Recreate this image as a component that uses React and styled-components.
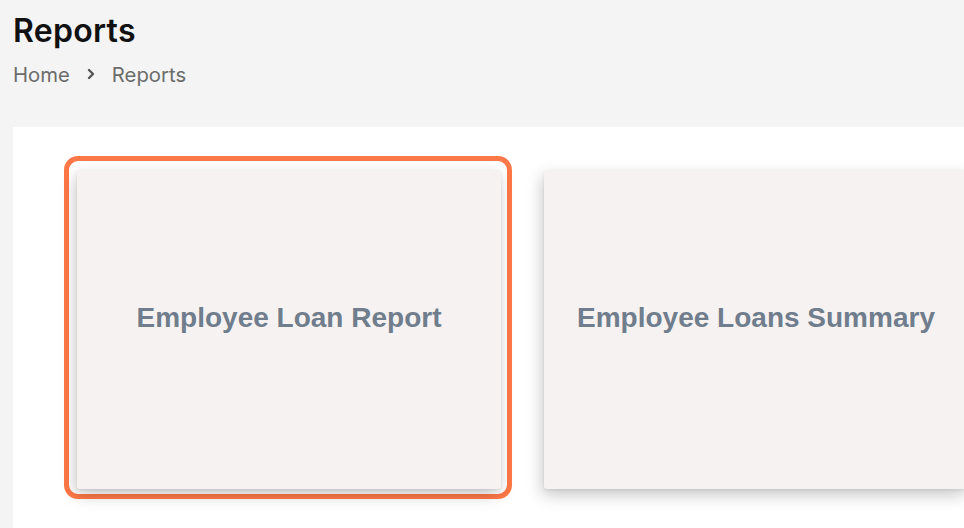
import React from 'react'
import styled, { createGlobalStyle } from 'styled-components'

const Global = createGlobalStyle`
    html, body {
        margin: 0;
        padding: 0;
        background: #f4f4f4;
        overflow: hidden;
    }
    body {
        font-family: Inter, "Noto Sans", sans-serif;
    }
`

const reports = [
    { id: 1, title: 'Employee Loan Report', selected: true },
    { id: 2, title: 'Employee Loans Summary', selected: false },
]

export default function App() {
    return (
        <>
            <Global />
            <Page>
                <Header>
                    <Title>Reports</Title>
                    <Crumbs>
                        <Crumb>Home</Crumb>
                        <Chevron viewBox="0 0 10 12">
                            <path d="M3 2 L7 6 L3 10" fill="none" stroke="#555" strokeWidth="2.4" strokeLinecap="round" strokeLinejoin="round" />
                        </Chevron>
                        <Crumb>Reports</Crumb>
                    </Crumbs>
                </Header>
                <Panel>
                    <Row>
                        {reports.map(r => (
                            <Tile key={r.id} $selected={r.selected}>
                                <Card>
                                    <CardTitle>{r.title}</CardTitle>
                                </Card>
                            </Tile>
                        ))}
                    </Row>
                </Panel>
            </Page>
        </>
    )
}

const Page = styled.div`
    display: flex;
    flex-direction: column;
    height: 528px;
    padding-left: 13px;`
const Header = styled.header`
    padding-top: 11px;
    height: 127px;
    box-sizing: border-box;
    flex-shrink: 0;`
const Title = styled.h1`
    margin: 0;
    font-size: 32px;
    line-height: 40px;
    font-weight: 600;
    color: #111;
    letter-spacing: 0.3px;`
const Crumbs = styled.nav`
    display: flex;
    align-items: center;
    gap: 15px;
    margin-top: 10px;`
const Crumb = styled.span`
    font-size: 20.3px;
    line-height: 28px;
    color: #6c6c6c;`
const Chevron = styled.svg`
    width: 10px;
    height: 12px;
    margin: 0 1px 2px 1px;`
const Panel = styled.main`
    flex: 1;
    background: #fff;
    padding: 29px 0 0 51px;
    overflow: hidden;`
const Row = styled.div`
    display: flex;
    align-items: flex-start;
    gap: 32px;`
const Tile = styled.div`
    border: ${p => (p.$selected ? '5px solid #ff7847' : 'none')};
    border-radius: 14px;
    padding: ${p => (p.$selected ? '9px 6px 5px 8px' : '14px 0 0 0')};
    flex-shrink: 0;`
const Card = styled.div`
    width: 424px;
    height: 319px;
    box-sizing: border-box;
    background: #f6f2f2;
    border-radius: 3px;
    box-shadow: -2px 6px 16px rgba(0, 0, 0, 0.22), 0 1px 3px rgba(0, 0, 0, 0.08);
    display: flex;
    align-items: center;
    justify-content: center;
    padding-bottom: 24px;`
const CardTitle = styled.h3`
    margin: 0;
    font-family: "Liberation Sans", Arial, sans-serif;
    font-size: 28px;
    font-weight: 700;
    color: #6f7d8c;`
